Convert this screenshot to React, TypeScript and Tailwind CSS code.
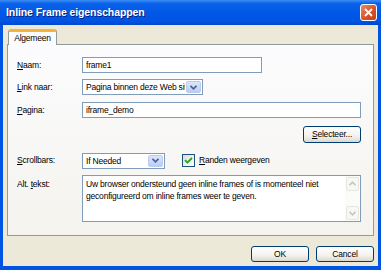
// Inline Frame eigenschappen – XP-style dialog

const FONT = { fontFamily: '"Liberation Sans", Arial, sans-serif' }

function Chevron({ color = '#4d6185' }: { color?: string }) {
  return (
    <svg width="7" height="5" viewBox="0 0 7 5">
      <path d="M0.5 0.8 L3.5 3.8 L6.5 0.8" fill="none" stroke={color} strokeWidth="1.6" />
    </svg>
  )
}

function Select({ value, width }: { value: string; width: string }) {
  return (
    <div className={`${width} h-[16px] flex border border-[#7f9db9] bg-white`}>
      <div className="flex-1 overflow-hidden whitespace-nowrap pl-[3px] leading-[14px]">{value}</div>
      <div className="w-[15px] m-px flex items-center justify-center rounded-[2px] border border-[#bccbee] bg-[linear-gradient(to_bottom,#dbe5fd,#b9cdf9)]">
        <Chevron />
      </div>
    </div>
  )
}

function Label({ children }: { children: React.ReactNode }) {
  return <div className="w-[65px] shrink-0 text-black">{children}</div>
}

function Button({ children, w = 'w-[58px]', h = 'h-[16px]' }: { children: React.ReactNode; w?: string; h?: string }) {
  return (
    <div className={`${w} ${h} flex items-center justify-center rounded-[3px] border border-[#003c74] bg-[linear-gradient(to_bottom,#ffffff,#f3f2ee_60%,#dcd8ce)] text-black`}>
      {children}
    </div>
  )
}

export default function App() {
  return (
    <div className="w-[381px] h-[270px] flex flex-col bg-[#0054e3] text-[8.5px] tracking-[-0.2px] text-black" style={FONT}>
      {/* Title bar */}
      <div className="h-[25px] flex items-center justify-between pl-[6px] pr-[4px] bg-[linear-gradient(to_bottom,#3d8df5_0%,#0a62ea_14%,#0058e6_50%,#0054e3_85%,#0048cc_100%)]">
        <span className="text-white font-bold text-[10.5px] tracking-[-0.1px] [text-shadow:1px_1px_0_#0a1f7a]">
          Inline Frame eigenschappen
        </span>
        <div className="w-[17px] h-[17px] flex items-center justify-center rounded-[3px] border border-white bg-[linear-gradient(135deg,#e88a6a,#d9532b_55%,#c2401c)]">
          <svg width="9" height="9" viewBox="0 0 9 9">
            <path d="M1 1 L8 8 M8 1 L1 8" stroke="white" strokeWidth="1.8" />
          </svg>
        </div>
      </div>

      {/* Body */}
      <div className="flex-1 mx-[3px] mb-[4px] bg-[#ece9d8] px-[4px] pt-[4px] flex flex-col">
        {/* Tab */}
        <div className="flex pl-[1px]">
          <div className="relative z-10 -mb-px h-[16px] w-[49px] flex items-center justify-center border-x border-[#919b9c] bg-[#fcfcfe] rounded-t-[3px] border-t-[3px] border-t-[#f7b23b]">
            Algemeen
          </div>
        </div>

        {/* Panel */}
        <div className="h-[192px] border border-[#919b9c] bg-[linear-gradient(to_bottom,#fcfcfe,#f4f3ee)] pl-[9px] pr-[12px] pt-[12px] flex flex-col">
          <div className="flex items-center h-[16px]">
            <Label><u>N</u>aam:</Label>
            <div className="w-[180px] h-[16px] border border-[#7f9db9] bg-white pl-[3px] leading-[14px]">frame1</div>
          </div>

          <div className="flex items-center h-[16px] mt-[6px]">
            <Label><u>L</u>ink naar:</Label>
            <Select value="Pagina binnen deze Web site" width="w-[121px]" />
          </div>

          <div className="flex items-center h-[16px] mt-[7px]">
            <Label><u>P</u>agina:</Label>
            <div className="flex-1 h-[16px] border border-[#7f9db9] bg-white pl-[3px] leading-[14px]">iframe_demo</div>
          </div>

          <div className="flex justify-end mt-[8px]">
            <Button h="h-[17px]"><span><u>S</u>electeer...</span></Button>
          </div>

          <div className="flex items-center h-[15px] mt-[10px]">
            <Label><u>S</u>crollbars:</Label>
            <Select value="If Needed" width="w-[83px]" />
            <div className="ml-[17px] w-[13px] h-[13px] border border-[#1c5180] bg-[linear-gradient(135deg,#dcdcd7,#ffffff)] flex items-center justify-center">
              <svg width="9" height="9" viewBox="0 0 9 9">
                <path d="M1 4.2 L3.4 6.6 L8 2" fill="none" stroke="#21a121" strokeWidth="1.8" />
              </svg>
            </div>
            <span className="ml-[4px]"><u>R</u>anden weergeven</span>
          </div>

          <div className="flex mt-[7px]">
            <div className="w-[65px] shrink-0 pt-[3px]">Alt. <u>t</u>ekst:</div>
            <div className="flex-1 h-[47px] flex border border-[#7f9db9] bg-white">
              <div className="flex-1 pl-[3px] pt-[2px] leading-[12px] whitespace-nowrap overflow-hidden">
                Uw browser ondersteund geen inline frames of is momenteel niet
                <br />
                geconfigureerd om inline frames weer te geven.
              </div>
              <div className="w-[15px] flex flex-col justify-between bg-[#fbfbf9] p-px">
                <div className="h-[14px] flex items-center justify-center rounded-[2px] border border-[#e8e6de] bg-[#f7f7f3] rotate-180">
                  <Chevron color="#c9c7ba" />
                </div>
                <div className="h-[14px] flex items-center justify-center rounded-[2px] border border-[#e8e6de] bg-[#f7f7f3]">
                  <Chevron color="#c9c7ba" />
                </div>
              </div>
            </div>
          </div>
        </div>

        {/* Buttons */}
        <div className="flex justify-end gap-[7px] mt-[10px]">
          <Button>OK</Button>
          <Button>Cancel</Button>
        </div>
      </div>
    </div>
  )
}
